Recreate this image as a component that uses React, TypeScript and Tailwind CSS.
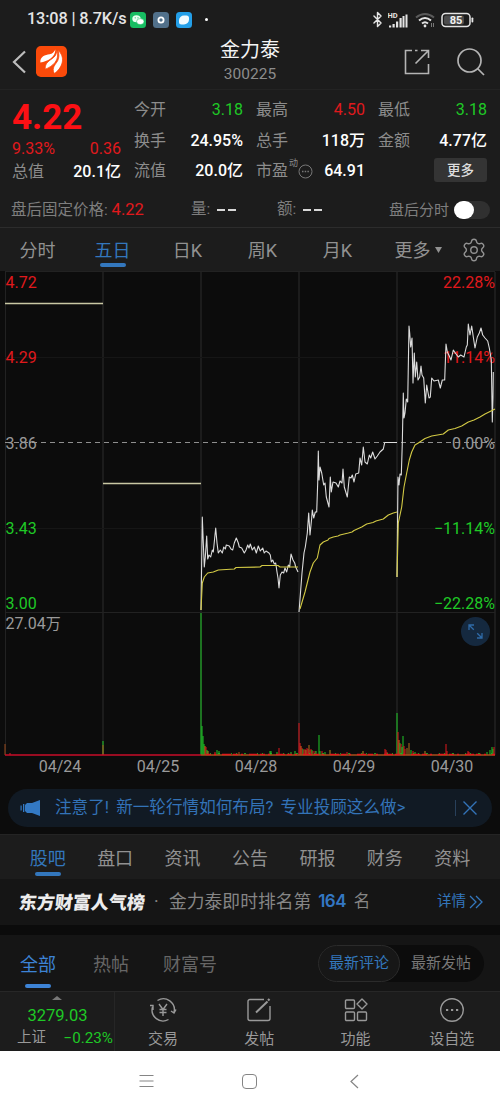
import { ReactNode } from "react"
import { Bluetooth, Settings } from "lucide-react"

const RED = "#e0191c"
const GREEN = "#1fc926"

const chartTabs = ["分时", "五日", "日K", "周K", "月K"]
const infoTabs = ["股吧", "盘口", "资讯", "公告", "研报", "财务", "资料"]

const quoteColumns = [
  [
    { label: "今开", value: "3.18", color: "text-[#1fc926]" },
    { label: "换手", value: "24.95%", color: "font-medium text-white" },
    { label: "流值", value: "20.0亿", color: "font-medium text-white" },
  ],
  [
    { label: "最高", value: "4.50", color: "text-[#e0191c]" },
    { label: "总手", value: "118万", color: "font-medium text-white" },
    { label: "市盈", value: "64.91", color: "font-medium text-white", dynamic: true },
  ],
  [
    { label: "最低", value: "3.18", color: "text-[#1fc926]" },
    { label: "金额", value: "4.77亿", color: "font-medium text-white" },
  ],
]

// price and average lines, one pair for each trading day
const priceLines = [
  "5,303.5 103,303.5",
  "103,483.5 201,483.5",
  "201,610 202.3,517 203.3,543 204.3,567 205.3,557 206.7,536 207.7,559 209,555 210.7,557 212.3,550 213.3,552 215.7,528 217,543 218.3,553 220.3,550 222.3,553 223.7,547 225.3,549 226.3,545 229.3,546 231,549 232.7,550 234.3,543 236.3,538 238.3,543 239.3,547 241.7,548 244.3,553 246,550 247.7,545 249,548 250.3,544 252.3,550 254.3,547 256.3,553 258.3,546 260.3,551 262.7,548 264.3,553 266,551 269,553 270.3,555 271.3,562 272.7,560 274.3,564 275.7,563 277,572 278,578 279,588 280.3,575 282,572 283.7,573 285,568 286.7,572 288.3,565 289.7,567 291,554 293,560 294.7,563 295.7,567 298,572",
  "299,612 300.7,590 302,573 304,553 305.3,547 307.3,533 308.7,513 310,535 311.7,518 312.3,510 313.7,518 315.3,512 316.7,512 317.7,483 318.3,451 319,480 320,467 321.7,473 323.7,485 325,483 326.3,497 329,507 330.3,477 331.3,492 333,482 336,483 338.3,487 340,481 342,483 343,469 344.3,487 347.3,497 349.3,477 351,478 352.3,475 354,482 355.7,474 358.7,473 360,458 361.7,465 363.3,447 365,462 367.3,464 369.3,455 370.7,458 372.7,452 375,459 377.3,456 380,452 383.3,449 384.7,442.5 397,442.5",
  "397,577 398,477 399,485 400,474 401.3,475 402.3,443 403.3,393 404,418 405,413 406.3,399 407.7,402 408.3,367 409,326 409.7,333 410.7,347 412,338 413,383 414.3,353 415.3,377 416.7,362 418,380 419.7,377 421,366 422,375 423.7,378 425.3,403 426.7,385 429,398 430.3,397 431.7,378 434,381 438.3,380 440.3,388 442.3,380 444.7,380 446,344 447.3,352 449.3,356 451,360 453.3,350 455.3,353 458.3,357 460.7,355 464,357 466.3,347 467.3,345 468.3,324 470,335 471.7,326 473.3,337 475,348 477.3,337 479.3,333 481,328 482.7,335 485,338 487.7,341 489.3,348 491.3,360 492.3,422 493,397 493.3,372",
]

const averageLines = [
  "201,610 202.3,583 204.3,577 207.7,573 213.3,572 218.3,570 234.3,569 236,567.5 260,567 262,565.5 278,565.5 280,567 298,567",
  "300,609 305,592 310,572 313.3,563 317.3,558 320,545 323.3,542 328,540 329,538.5 333.3,537 338,536 340,535 348.3,533 352,532 354,530.5 361.7,527 366.7,524 373,522.5 376,521 383.3,519 388.3,515 393.3,513 397,512",
  "397,577 398.3,523 401.7,507 404,487 406.7,473 409.3,460 411.7,452 415,445 418.3,443 425,438.5 431.7,436 443.3,434 448.3,430 455,428.5 461.7,426 468.3,422 474,420 480,417 485,414 489,412 495,409",
]

// [x, height, color]
const volumeBars: [number, number, string][] = [
  [5, 11, "#9a4a1c"], [10, 2, RED], [103, 14, GREEN], [103, 10, "#b0501c"],
  [201, 142, GREEN], [202, 29, GREEN], [203, 19, GREEN], [204, 11, GREEN], [205, 9, "#e0601c"], [206, 8, RED], [207, 5, GREEN], [208, 4, "#b08a1c"],
  [215, 3, RED], [217, 5, GREEN], [219, 4, GREEN], [239, 3, "#b0501c"], [270, 4, GREEN], [271, 4, GREEN], [277, 3, GREEN], [279, 7, RED], [291, 3, GREEN], [295, 4, GREEN],
  [299, 32, RED], [300, 12, RED], [301, 9, "#e0601c"], [302, 7, RED], [303, 6, GREEN], [304, 5, RED], [305, 6, RED], [306, 5, "#b08a1c"], [307, 7, RED], [308, 6, RED], [309, 10, "#b0701c"], [310, 5, RED], [311, 6, RED], [312, 5, GREEN], [313, 4, RED], [315, 4, RED], [316, 4, GREEN],
  [319, 20, GREEN], [320, 4, GREEN], [322, 4, RED], [325, 3, GREEN], [330, 5, "#b08a1c"], [347, 3, RED], [363, 4, "#b08a1c"], [385, 6, RED], [386, 5, RED], [387, 3, RED],
  [397, 42, GREEN], [398, 23, RED], [399, 15, "#e0601c"], [400, 12, GREEN], [401, 11, RED], [402, 8, GREEN], [403, 19, GREEN], [404, 9, RED], [405, 6, RED], [407, 7, "#b0701c"], [409, 12, "#b0701c"], [411, 5, GREEN], [413, 4, RED], [415, 3, GREEN],
  [425, 4, "#b08a1c"], [446, 11, RED], [447, 4, RED], [468, 4, RED], [469, 3, RED], [487, 3, GREEN], [490, 5, GREEN], [492, 8, GREEN], [493, 6, GREEN], [494, 8, RED],
]

const dayLines = [5.5, 103, 201, 299, 397, 495]
const dates = ["04/24", "04/25", "04/28", "04/29", "04/30"]

function StatusBar() {
  return (
    <div className="flex h-[39px] items-center pl-[27px] pr-[26px] text-[#e4e4e4]">
      <span className="w-[103px] whitespace-nowrap text-[16.3px] font-medium tracking-[-0.15px]">13:08 | 8.7K/s</span>
      <div className="flex items-center gap-[7px]">
        <svg width="16" height="16" viewBox="0 0 16 16">
          <rect width="16" height="16" rx="3.5" fill="#17bd62" />
          <ellipse cx="6.5" cy="6.7" rx="4.2" ry="3.5" fill="#e9fff2" />
          <ellipse cx="10.3" cy="9.6" rx="3.7" ry="3" fill="#fff" stroke="#17bd62" strokeWidth="0.5" />
          <circle cx="5.2" cy="5.8" r=".6" fill="#17bd62" />
          <circle cx="8" cy="5.8" r=".6" fill="#17bd62" />
        </svg>
        <svg width="16" height="16" viewBox="0 0 16 16">
          <rect width="16" height="16" rx="3.5" fill="#51708a" />
          <circle cx="8" cy="8" r="2.6" fill="none" stroke="#fff" strokeWidth="1.8" />
        </svg>
        <svg width="16" height="16" viewBox="0 0 16 16">
          <rect width="16" height="16" rx="3.5" fill="#249fe8" />
          <path d="M3 8.5a5 5 0 0 1 5-5h2.500a2.500 2.500 0 0 1 2.500 2.500v1.500a5 5 0 0 1-5 5H5.500A2.500 2.500 0 0 1 3 10z" fill="#f2fbff" />
        </svg>
      </div>
      <div className="ml-[13px] size-[3px] rounded-full bg-white" />
      <div className="ml-auto flex items-center">
        <Bluetooth size={17} strokeWidth={2} className="mr-[2px]" />
        <svg width="20" height="18" viewBox="0 0 20 18" fill="currentColor">
          <text x="-.5" y="7" fontSize="7.5" fontWeight="700">HD</text>
          <rect x="1" y="14.5" width="2.2" height="2" />
          <rect x="4.500" y="13" width="2.2" height="3.5" />
          <rect x="8" y="10.500" width="2.2" height="6" />
          <rect x="11.500" y="7" width="2.2" height="9.5" />
          <rect x="14.500" y="5" width="2" height="11.5" />
          <rect x="17.500" y="3.500" width="2" height="13" />
        </svg>
        <svg width="20" height="16" viewBox="0 0 20 16" fill="none" strokeWidth="2" className="ml-[7px]">
          <path d="M1 5.5Q10-1.5 19 5.5" stroke="#5a5a5a" />
          <path d="M4 8.5q6-5 12 0M7 11.5q3-2.500 6 0" stroke="#e4e4e4" />
          <circle cx="10" cy="14" r="1.4" fill="#e4e4e4" />
          <path d="M16.5 11v4M18.5 11v4" stroke="#777" strokeWidth="1" />
        </svg>
        <svg width="33" height="16" viewBox="0 0 33 16" className="ml-[6px]">
          <rect x="1" y="1.5" width="28" height="13" rx="3.5" fill="none" stroke="#e4e4e4" strokeWidth="1.5" />
          <rect x="3" y="3.5" width="20" height="9" rx="2" fill="#4c4c4c" />
          <rect x="30.5" y="5.5" width="1.8" height="5" rx=".8" fill="#e4e4e4" />
          <text x="15" y="12" fontSize="11" fontWeight="700" textAnchor="middle" fill="#f2f2f2">85</text>
        </svg>
      </div>
    </div>
  )
}

function Header() {
  return (
    <div className="grid h-[51px] grid-cols-3 items-center border-b border-[#232323]">
      <div className="flex items-center pb-[5px] pl-[12px]">
        <svg width="15" height="24" viewBox="0 0 15 24" fill="none" stroke="#bdbdbd" strokeWidth="2.2">
          <path d="M13 1.500 2 12l11 10.500" />
        </svg>
        <svg width="31" height="31" viewBox="0 0 32 32" className="ml-[9px]">
          <rect width="32" height="32" rx="5" fill="#fa4a0a" />
          <path d="M4.5 17C4 11 9.5 9 14 8.5 17 8 18.5 6 20 3.500 20 12 12 15.500 4.5 17z" fill="#fff" />
          <path d="M9.5 24C9 17 14.5 15 18 12c2.500-2 3.500-5 3.500-8C25 15 17 21 9.5 24z" fill="#fff" stroke="#fa4a0a" strokeWidth=".8" />
          <path d="M19 28.500c-3.500-6 1.500-9.500 3.500-13.5 1.500-3 1.500-7 .2-10.500C30.500 11 28 22 19 28.500z" fill="#fff" stroke="#fa4a0a" strokeWidth=".8" />
        </svg>
      </div>
      <div className="-mt-[4px] text-center">
        <div className="text-[20px] leading-[25px] text-[#f4f4f4]">金力泰</div>
        <div className="text-[15.5px] leading-[23px] text-[#8c8c8c]">300225</div>
      </div>
      <div className="flex items-center justify-end gap-[27px] pb-[5px] pr-[15px]">
        <svg width="26" height="26" viewBox="0 0 26 26" fill="none" stroke="#b4b4b4" strokeWidth="1.6">
          <path d="M8 1.500H1.500v23h23V15M11 1.500h2.500M17 1.500h7.500V9M24.500 1.500 11.500 14.500" />
        </svg>
        <svg width="28" height="28" viewBox="0 0 28 28" fill="none" stroke="#b4b4b4" strokeWidth="1.7">
          <circle cx="12.500" cy="12.500" r="11.500" />
          <path d="m20.500 20.500 6.500 6.500" />
        </svg>
      </div>
    </div>
  )
}

function QuotePanel() {
  return (
    <div className="grid h-[103px] grid-cols-4 gap-x-[13px] pb-[7px] pl-[12px] pr-[13px] pt-[5px] text-[16px] text-[#8c8c8c]">
      <div className="flex flex-col">
        <div className="h-[43px] text-[35px] font-bold leading-[46px] text-[#fb1014]">4.22</div>
        <div className="flex h-[19px] items-center justify-between pt-[2px] text-[#e0191c]">
          <span>9.33%</span>
          <span>0.36</span>
        </div>
        <div className="flex h-[30px] items-center justify-between">
          <span>总值</span>
          <span className="font-medium text-white">20.1亿</span>
        </div>
      </div>
      {quoteColumns.map((rows, i) => (
        <div key={i} className="flex flex-col">
          {rows.map((row) => (
            <div key={row.label} className="flex h-[30.5px] items-center justify-between whitespace-nowrap">
              <span className="flex items-center">
                {row.label}
                {row.dynamic && (
                  <>
                    <span className="-mt-[16px] ml-px text-[9px] leading-none">动</span>
                    <svg width="15" height="15" viewBox="0 0 15 15" fill="none" stroke="#777">
                      <circle cx="7.5" cy="7.5" r="6.5" />
                      <path d="M4 7.5h7" strokeDasharray="1.5 1.2" strokeWidth="1.5" />
                    </svg>
                  </>
                )}
              </span>
              <span className={row.color}>{row.value}</span>
            </div>
          ))}
          {i === 2 && (
            <button className="mt-[2px] h-[24px] w-[53px] self-end rounded-[3px] bg-[#343434] text-[13.5px] font-medium text-[#dedede]">
              更多
            </button>
          )}
        </div>
      ))}
    </div>
  )
}

function AfterHours() {
  return (
    <div className="flex h-[35px] items-center border-b border-[#2c2c2c] pl-[11px] pr-[10px] text-[15.5px] text-[#7e7e7e]">
      <div className="w-[180px]">
        盘后固定价格: <span className="text-[16.5px] text-[#e0191c]">4.22</span>
      </div>
      <div className="flex w-[86px] items-center gap-[7px]">
        量: <Dashes />
      </div>
      <div className="flex items-center gap-[7px]">
        额: <Dashes />
      </div>
      <span className="ml-auto text-[15px]">盘后分时</span>
      <div className="ml-[5px] flex h-[18px] w-[36px] items-center rounded-full bg-[#303030]">
        <div className="h-[18px] w-[20px] rounded-full bg-white" />
      </div>
    </div>
  )
}

function Dashes() {
  return (
    <span className="flex gap-[3px]">
      <i className="h-[2px] w-[8px] bg-[#d8d8d8]" />
      <i className="h-[2px] w-[8px] bg-[#d8d8d8]" />
    </span>
  )
}

function ChartTabs() {
  return (
    <div className="flex h-[43px] text-[18px] text-[#919191]">
      {chartTabs.map((tab) => (
        <div key={tab} className="flex w-[75px] flex-col items-center pt-[9px]">
          <span className={tab === "五日" ? "leading-[27px] text-[#3377bd]" : "leading-[27px]"}>{tab}</span>
          {tab === "五日" && <i className="-mt-px h-[4px] w-[26px] rounded-full bg-[#3377bd]" />}
        </div>
      ))}
      <div className="flex w-[86px] items-start justify-center gap-[4px] pt-[9px] leading-[27px]">
        更多
        <svg width="7" height="6" viewBox="0 0 7 6" className="mt-[10px]">
          <path d="M0 0h7L3.500 6z" fill="#919191" />
        </svg>
      </div>
      <Settings size={26} strokeWidth={1.3} className="mt-[9px]" />
    </div>
  )
}

function PriceChart() {
  return (
    <div className="relative h-[509px] bg-[#0c0c0c]">
      <svg width="500" height="509" viewBox="0 271 500 509" className="block">
        <g stroke="#222222">
          {dayLines.map((x) => (
            <path key={x} d={`M${x} 272V755`} strokeWidth={x % 1 ? 1 : 1.5} />
          ))}
          <path d="M5 271.5H495M5 612.5H495" />
          <path d="M5 357.5H495M5 528.5H495" stroke="#161616" />
        </g>
        <path d="M5 442.5H495" stroke="#8f8f8f" strokeDasharray="5 4" />

        {volumeBars.map(([x, h, color], i) => (
          <rect key={i} x={x - 0.5} y={755 - h} width="1" height={h} fill={color} />
        ))}
        <path d="M5 755H201" stroke="#c80d28" strokeWidth="1.5" />
        <path d="M201 755H495" stroke="#a8501c" strokeWidth="1.5" />
        <path d="M206 754.5H495" stroke={RED} strokeWidth="1.5" strokeDasharray="5 3 2 6 9 2" />
        <path d="M210 753.5H495" stroke={GREEN} strokeDasharray="1 7 2 11 1 4" opacity=".7" />

        <g fontSize="16" fill="#9a9a9a">
          <g fill="#e0191c">
            <text x="5.5" y="288">4.72</text>
            <text x="5.5" y="363">4.29</text>
            <text x="495" y="288" textAnchor="end">22.28%</text>
            <text x="495" y="363" textAnchor="end">11.14%</text>
          </g>
          <text x="5.5" y="449">3.86</text>
          <text x="495" y="449" textAnchor="end">0.00%</text>
          <g fill={GREEN}>
            <text x="5.5" y="534">3.43</text>
            <text x="5.5" y="609">3.00</text>
            <text x="495" y="534" textAnchor="end">−11.14%</text>
            <text x="495" y="609" textAnchor="end">−22.28%</text>
          </g>
          <text x="5.5" y="629">
            27.04<tspan fontSize="15">万</tspan>
          </text>
          {dates.map((date, i) => (
            <text key={date} x={60 + i * 98} y="772" textAnchor="middle">
              {date}
            </text>
          ))}
        </g>

        <g fill="none" strokeLinejoin="round">
          {priceLines.map((points, i) => (
            <polyline key={i} points={points} stroke={i < 2 ? "#c9c8a4" : "#dcdcdc"} strokeWidth={i < 2 ? 1.4 : 1.1} />
          ))}
          {averageLines.map((points, i) => (
            <polyline key={i} points={points} stroke="#d3ca45" strokeWidth="1.1" />
          ))}
        </g>
      </svg>
      <button className="absolute right-[10px] top-[346px] flex size-[29px] items-center justify-center rounded-full bg-[#15293f]">
        <svg width="15" height="15" viewBox="0 0 15 15" fill="none" stroke="#2f6ba8" strokeWidth="1.3">
          <path d="M1 6V1h5M1 1l4.800 4.800M14 9v5H9M14 14 9.200 9.200" />
        </svg>
      </button>
    </div>
  )
}

function Banner() {
  return (
    <div className="h-[54px] bg-[#0c0c0c] px-[8px] pt-[9px]">
      <div className="flex h-[38px] items-center rounded-full bg-[#111a24] pl-[12px] pr-[15px] text-[#3373b8]">
        <svg width="21" height="18" viewBox="0 0 21 18" fill="#3379c4">
          <path d="M20 1v16l-8-3H7l-2-2V6l2-2h5z" />
          <rect x="3" y="5" width="1.3" height="8" />
          <rect x=".5" y="6.5" width="1.2" height="5" />
        </svg>
        <span className="ml-[14px] whitespace-nowrap text-[16.6px] [word-spacing:3px]">
          注意了! 新一轮行情如何布局? 专业投顾这么做&gt;
        </span>
        <i className="ml-auto h-[16px] w-px bg-[#28405b]" />
        <svg width="14" height="14" viewBox="0 0 14 14" stroke="currentColor" strokeWidth="1.4" className="ml-[7px]">
          <path d="M.5.5l13 13M13.5.5l-13 13" />
        </svg>
      </div>
    </div>
  )
}

function InfoTabs() {
  return (
    <div className="grid h-[45px] grid-cols-7 border-t border-[#242424] bg-[#1c1c1c] px-[14px] text-[18px] text-[#919191]">
      {infoTabs.map((tab, i) => (
        <div key={tab} className="flex flex-col items-center pt-[10px]">
          <span className={i === 0 ? "leading-[28px] text-[#3377bd]" : "leading-[28px]"}>{tab}</span>
          {i === 0 && <i className="-mt-px h-[4px] w-[26px] rounded-full bg-[#3377bd]" />}
        </div>
      ))}
    </div>
  )
}

function RankRow() {
  return (
    <div className="flex h-[46px] items-center whitespace-nowrap bg-[#151515] pl-[19px] pr-[17px] text-[17.8px] text-[#868686]">
      <span className="w-[135px] -skew-x-6 text-[18px] font-black text-[#ececec]">东方财富人气榜</span>
      <span className="w-[15px]">·</span>
      金力泰即时排名第
      <span className="ml-[7px] mr-[8px] font-['Inter'] text-[17px] font-semibold tracking-[-0.6px] text-[#3377c4]">164</span>
      <span className="text-[16.5px]">名</span>
      <span className="ml-auto text-[14.5px]">
        <span className="text-[#3377bd]">详情</span>
      </span>
      <svg width="14" height="14" viewBox="0 0 14 14" fill="none" stroke="#3377bd" strokeWidth="1.3" className="ml-[3px]">
        <path d="M1 1l6 6-6 6M7 1l6 6-6 6" />
      </svg>
    </div>
  )
}

function CommentTabs() {
  return (
    <div className="flex h-[56px] bg-[#151515] pl-[20px] pr-[16px] text-[18px] text-[#666]">
      <div className="flex w-[73px] flex-col pt-[15px] text-[#3d83d6]">
        <span className="leading-[29px]">全部</span>
        <i className="ml-[5px] mt-[5px] h-[4px] w-[26px] shrink-0 rounded-full bg-[#3d83d6]" />
      </div>
      <span className="w-[70px] pt-[15px] leading-[29px]">热帖</span>
      <span className="pt-[15px] leading-[29px]">财富号</span>
      <div className="ml-auto mt-[10px] flex h-[37px] w-[166px] items-center rounded-full bg-[#0c0c0c] text-[15px]">
        <span className="flex h-[37px] w-[82px] items-center justify-center rounded-full border border-[#2b2b2b] bg-[#171717] text-[#3377bd]">
          最新评论
        </span>
        <span className="ml-[11px] text-[#777]">最新发帖</span>
      </div>
    </div>
  )
}

function NavItem({ label, children }: { label: string; children: ReactNode }) {
  return (
    <div className="flex flex-1 flex-col items-center pt-[5px]">
      <svg width="28" height="26" viewBox="0 0 28 26" fill="none" stroke="#999" strokeWidth="1.4">
        {children}
      </svg>
      <span className="mt-[5px] text-[15px] leading-[22px] text-[#999]">{label}</span>
    </div>
  )
}

function BottomNav() {
  return (
    <div className="flex h-[60px] border-t border-[#272727] bg-[#1c1c1c]">
      <div className="relative w-[115px] border-r border-[#262626] pt-[13px] text-[#1fc926]">
        <svg width="10" height="4" viewBox="0 0 10 4" className="absolute left-[52px] top-[4px]">
          <path d="M0 4 5 0l5 4z" fill="#777" />
        </svg>
        <div className="pl-px text-center text-[16.5px] leading-[22px]">3279.03</div>
        <div className="flex justify-between pl-[17px] pr-px leading-[22px]">
          <span className="text-[14.5px] text-[#999]">上证</span>
          <span className="text-[15.2px]">−0.23%</span>
        </div>
      </div>
      <NavItem label="交易">
        <path d="M8.5 3.5A11 11 0 0 1 25 15.5M27 12.5l-2 3.500-3-2M19.5 22.5A11 11 0 0 1 3.5 10M1 8.5h3v4.500" />
        <path d="m10 7 4 5.5L18 7M14 12.5V19M10.5 12.5h7M10.5 15.5h7" />
      </NavItem>
      <NavItem label="发帖">
        <path d="M19 2.5H5a2 2 0 0 0-2 2v17a2 2 0 0 0 2 2h18a2 2 0 0 0 2-2V9" />
        <path d="M11 15.5 22.5 4.5" strokeWidth="2" />
        <path d="m23 3.500 1.500-1.500" strokeWidth="2.2" />
      </NavItem>
      <NavItem label="功能">
        <rect x="3.5" y="3" width="9" height="8.5" rx="1" />
        <rect x="3.5" y="15" width="9" height="8.5" rx="1" />
        <rect x="15.5" y="15" width="9" height="8.5" rx="1" />
        <path d="m20 2 5 5-5 5-5-5z" strokeLinejoin="round" />
      </NavItem>
      <NavItem label="设自选">
        <circle cx="14" cy="13" r="11.3" />
        <path d="M8 13h2.200M13 13h2.200M18 13h2.200" strokeWidth="2" />
      </NavItem>
    </div>
  )
}

function SystemNav() {
  return (
    <div className="flex h-[60px] items-center bg-white pl-[139px]">
      <svg width="15" height="14" viewBox="0 0 15 14" stroke="#858585" strokeWidth="1.2">
        <path d="M.5 1.5h14M.5 7h14M.5 12.5h14" />
      </svg>
      <i className="ml-[88px] h-[15px] w-[15px] rounded-[4px] border border-[#858585]" />
      <svg width="11" height="15" viewBox="0 0 11 15" fill="none" stroke="#858585" strokeWidth="1.2" className="ml-[92px]">
        <path d="M9 1 2 7.5 9 14" />
      </svg>
    </div>
  )
}

export default function App() {
  return (
    <div className="h-[1111px] w-[500px] overflow-hidden bg-[#1c1c1c] font-['Roboto','Noto_Sans_CJK_SC',sans-serif]">
      <StatusBar />
      <Header />
      <QuotePanel />
      <AfterHours />
      <ChartTabs />
      <PriceChart />
      <Banner />
      <InfoTabs />
      <RankRow />
      <div className="h-[10px] bg-[#0b0b0b]" />
      <CommentTabs />
      <BottomNav />
      <SystemNav />
    </div>
  )
}
